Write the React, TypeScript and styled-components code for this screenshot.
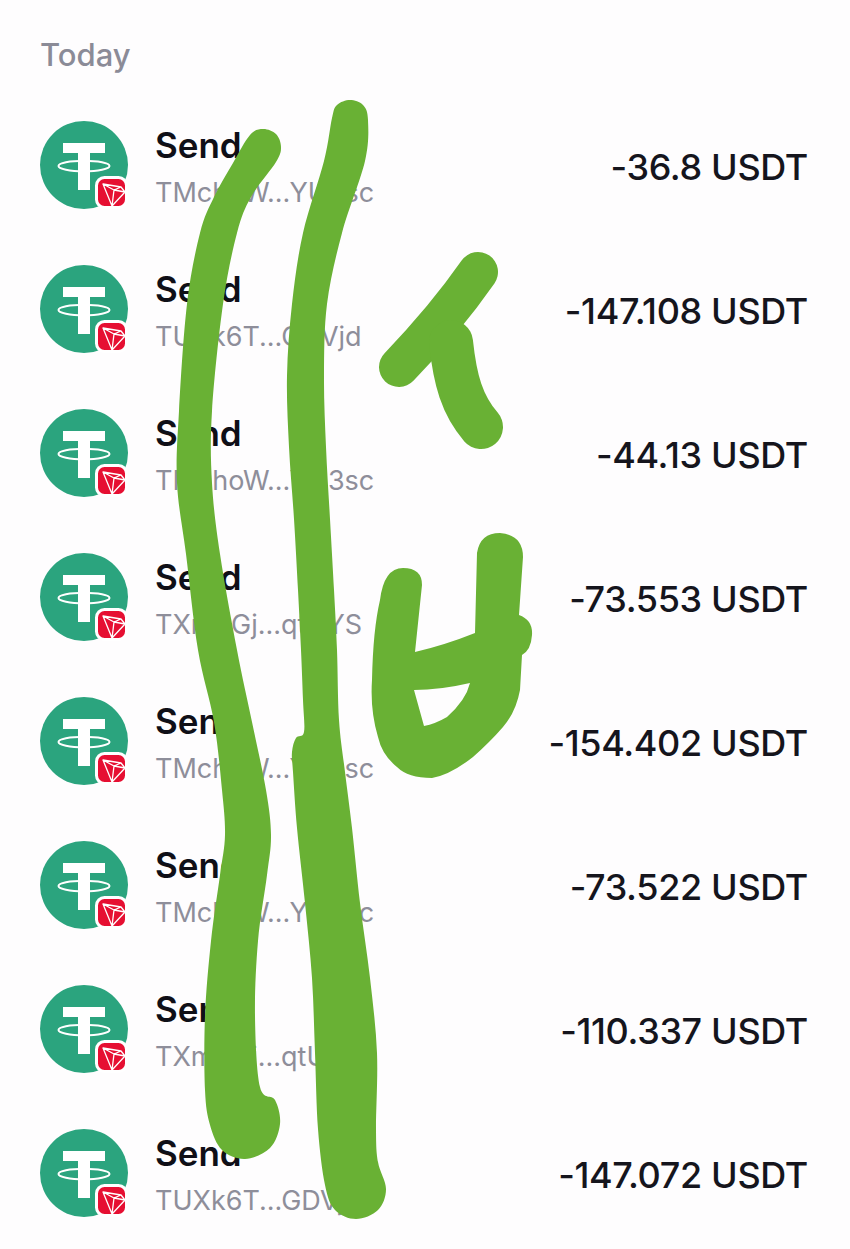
import styled, { createGlobalStyle } from "styled-components";

const GlobalStyle = createGlobalStyle`
  html, body {
    margin: 0;
    padding: 0;
    background-color: #fefdfe;
  }
`;

const StyledPage = styled.div`
  position: relative;
  width: 850px;
  height: 1249px;
  overflow: hidden;
  padding: 36px 42px 0 40px;
  box-sizing: border-box;
  font-family: Inter, "Liberation Sans", sans-serif;
`;

const StyledHeading = styled.h2`
  margin: 0 0 21px 0;
  height: 36px;
  line-height: 38px;
  font-size: 31px;
  font-weight: 500;
  color: #8b8b97;
`;

const StyledRow = styled.div`
  display: flex;
  align-items: center;
  height: 144px;
`;

const StyledIconWrap = styled.div`
  position: relative;
  width: 88px;
  height: 88px;
  flex-shrink: 0;
`;

const StyledBadge = styled.svg`
  position: absolute;
  right: 0;
  bottom: 0;
`;

const StyledLabels = styled.div`
  margin-left: 27px;
  padding-top: 4px;
  flex: 1;
`;

const StyledTitle = styled.div`
  font-size: 35px;
  line-height: 40px;
  font-weight: 600;
  color: #0f0f17;
`;

const StyledAddress = styled.div`
  font-size: 27px;
  line-height: 32px;
  margin-top: 12px;
  color: #8e8e9a;
`;

const StyledAmount = styled.div`
  font-size: 36px;
  font-weight: 500;
  color: #15151d;
  letter-spacing: -0.35px;
  padding-top: 4px;
`;

const StyledScribble = styled.svg`
  position: absolute;
  left: 0;
  top: 0;
`;

const transfers = [
  { address: "TMchoW...YU3sc", amount: "-36.8" },
  { address: "TUXk6T...GDVjd", amount: "-147.108" },
  { address: "TMchoW...YU3sc", amount: "-44.13" },
  { address: "TXmqGj...qtUYS", amount: "-73.553" },
  { address: "TMchoW...YU3sc", amount: "-154.402" },
  { address: "TMchoW...YU3sc", amount: "-73.522" },
  { address: "TXmqGj...qtUYS", amount: "-110.337" },
  { address: "TUXk6T...GDVjd", amount: "-147.072" },
];

// closed catmull-rom through the traced outline of a marker stroke
const closedCurve = (points: number[][]) => {
  const at = (i: number) => points[(i + points.length) % points.length];
  let d = `M${points[0][0]} ${points[0][1]}`;
  points.forEach((p, i) => {
    const [p0, p2, p3] = [at(i - 1), at(i + 1), at(i + 2)];
    const c1 = [p[0] + (p2[0] - p0[0]) / 6, p[1] + (p2[1] - p0[1]) / 6];
    const c2 = [p2[0] - (p3[0] - p[0]) / 6, p2[1] - (p3[1] - p[1]) / 6];
    d += ` C${c1[0]} ${c1[1]} ${c2[0]} ${c2[1]} ${p2[0]} ${p2[1]}`;
  });
  return d + " Z";
};

const leftStroke = [
  [263, 129], [276, 134], [281, 147], [276, 162], [251, 197], [237, 233], [223, 304], [212, 411],
  [212, 483], [220, 554], [237, 650], [252, 722], [266, 790], [271, 835], [267, 875], [258, 941],
  [255, 1016], [260, 1087], [275, 1100], [280, 1124], [270, 1148], [245, 1159], [222, 1150], [210, 1125],
  [205, 1090], [205, 1016], [211, 941], [220, 875], [225, 835], [222, 790], [214, 722], [198, 650],
  [186, 554], [177, 483], [179, 411], [187, 304], [200, 233], [214, 197], [233, 163], [250, 135],
];

const rightStroke = [
  [350, 100], [363, 105], [368, 120], [365, 161], [342, 233], [327, 304], [324, 376], [326, 447],
  [330, 519], [334, 590], [337, 650], [339, 720], [345, 772], [352, 828], [360, 903], [370, 978],
  [377, 1053], [376, 1129], [378, 1162], [386, 1189], [378, 1210], [356, 1219], [335, 1210], [325, 1185],
  [318, 1129], [315, 1053], [312, 978], [305, 903], [297, 828], [293, 772], [292, 752], [296, 738],
  [304, 732], [303, 700], [301, 650], [298, 590], [294, 519], [289, 447], [287, 376], [292, 304], [303, 233],
  [324, 161], [332, 118], [337, 105],
];

const TokenIcon = () => (
  <StyledIconWrap>
    <svg width="88" height="88" viewBox="0 0 88 88">
      <circle cx="44" cy="44" r="44" fill="#2ba47e" />
      <path d="M23 22 H65 V32 H50 V69 H38 V32 H23 Z" fill="#fff" />
      <ellipse cx="44" cy="45" rx="25.5" ry="5.2" fill="none" stroke="#fff" strokeWidth="2" />
    </svg>
    <StyledBadge width="33" height="33" viewBox="0 0 33 33">
      <rect x="1.5" y="1.5" width="30" height="30" rx="8" fill="#e60f32" stroke="#fff" strokeWidth="3" />
      <path
        d="M8 8 L26 11 L30 16 L17 30 Z M8 8 L17 30 L19 14 Z M19 14 L30 16 M8 8 L19 14 L26 11"
        fill="none"
        stroke="#fff"
        strokeWidth="1.3"
        strokeLinejoin="round"
      />
    </StyledBadge>
  </StyledIconWrap>
);

const Scribble = () => (
  <StyledScribble width="850" height="1249" viewBox="0 0 850 1249">
    <g fill="#69b134">
      <path d={closedCurve(leftStroke)} />
      <path d={closedCurve(rightStroke)} />
      <path
        fillRule="evenodd"
        d="M403 568 Q422 568 422 585 L415 652 Q445 645 475 633 L477 553 Q480 533 500 533 Q523 535 523 557 L519 615 Q533 620 532 635 Q531 650 522 655 L520 690 Q516 712 503 727 Q490 742 473 757 Q450 775 432 778 Q408 778 397 767 Q382 755 378 737 Q370 710 372 680 Q373 630 380 600 Q384 568 403 568 Z M414 690 Q440 690 470 683 Q466 700 447 717 Q435 724 424 726 Z"
      />
    </g>
    <g fill="none" stroke="#69b134" strokeLinecap="round" strokeLinejoin="round">
      <path d="M478 272 C455 305 425 340 399 367" strokeWidth="40" />
      <path d="M451 342 C455 380 462 405 481 427" strokeWidth="44" />
    </g>
  </StyledScribble>
);

export default function App() {
  return (
    <StyledPage>
      <GlobalStyle />
      <StyledHeading>Today</StyledHeading>
      {transfers.map((transfer, key) => (
        <StyledRow key={key}>
          <TokenIcon />
          <StyledLabels>
            <StyledTitle>Send</StyledTitle>
            <StyledAddress>{transfer.address}</StyledAddress>
          </StyledLabels>
          <StyledAmount>{transfer.amount} USDT</StyledAmount>
        </StyledRow>
      ))}
      <Scribble />
    </StyledPage>
  );
}
